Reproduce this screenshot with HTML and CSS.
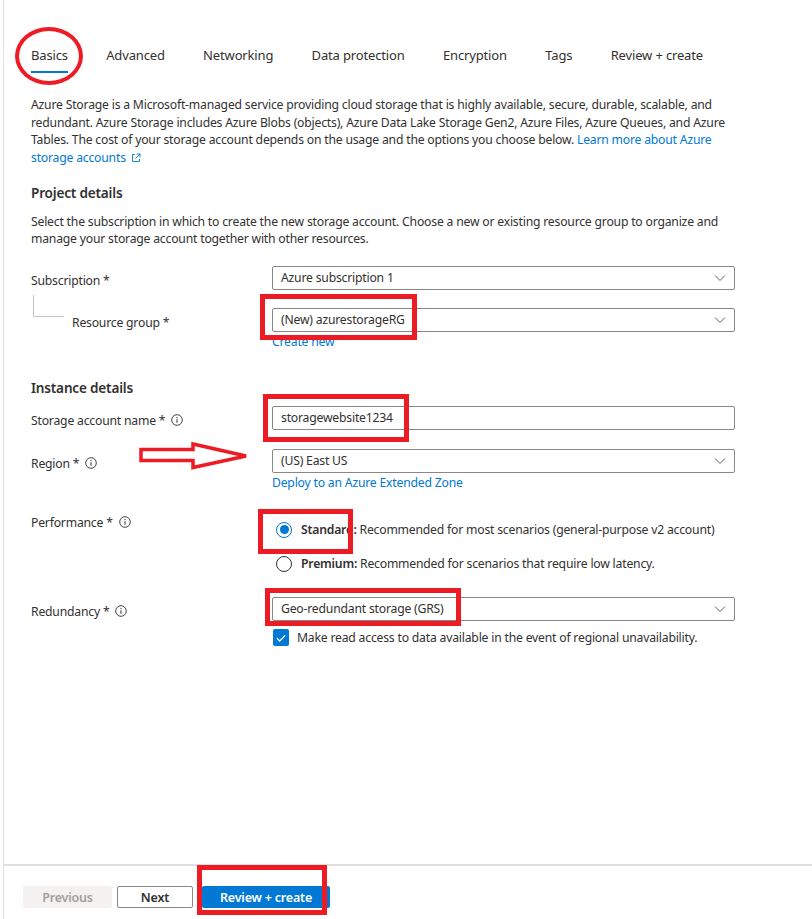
FILE: index.html
```html
<!DOCTYPE html>
<html lang="en">
<head>
    <meta charset="UTF-8">
    <meta name="viewport" content="width=device-width, initial-scale=1.0">
    <title>Create a storage account - Basics</title>
    <link rel="stylesheet" href="styles.css">
</head>
<body>
    <div class="blade">
        <div class="blade-body">
            <nav class="tabs">
                <span class="tab active">Basics</span>
                <span class="tab">Advanced</span>
                <span class="tab">Networking</span>
                <span class="tab">Data protection</span>
                <span class="tab">Encryption</span>
                <span class="tab">Tags</span>
                <span class="tab">Review + create</span>
            </nav>

            <p class="intro">
                Azure Storage is a Microsoft-managed service providing cloud storage that is highly available, secure, durable, scalable, and<br>
                redundant. Azure Storage includes Azure Blobs (objects), Azure Data Lake Storage Gen2, Azure Files, Azure Queues, and Azure<br>
                Tables. The cost of your storage account depends on the usage and the options you choose below. <a class="link" href="#">Learn more about Azure<br>
                storage accounts <svg class="ext-icon" viewBox="0 0 10 10" width="10" height="10"><path d="M4 1.5H1.5v7h7V6" fill="none" stroke="#0078d4" stroke-width="0.9"/><path d="M5.5 1h3.5v3.5M9 1L4.5 5.5" fill="none" stroke="#0078d4" stroke-width="0.9"/></svg></a>
            </p>

            <!-- Project details -->
            <h2 class="section-title">Project details</h2>
            <p class="section-desc">
                Select the subscription in which to create the new storage account. Choose a new or existing resource group to organize and<br>
                manage your storage account together with other resources.
            </p>

            <div class="field-row first">
                <label class="field-label">Subscription *</label>
                <div class="control">
                    <div class="select">
                        <span>Azure subscription 1</span>
                        <svg class="chevron" viewBox="0 0 12 6" width="12" height="6"><path d="M1 0.5l5 5 5-5" fill="none" stroke="#605e5c" stroke-width="1"/></svg>
                    </div>
                </div>
            </div>

            <div class="field-row nested">
                <label class="field-label">
                    <span class="tree-line"></span>
                    <span>Resource group *</span>
                </label>
                <div class="control">
                    <div class="select">
                        <span>(New) azurestorageRG</span>
                        <svg class="chevron" viewBox="0 0 12 6" width="12" height="6"><path d="M1 0.5l5 5 5-5" fill="none" stroke="#605e5c" stroke-width="1"/></svg>
                    </div>
                    <a class="link sub-link" href="#">Create new</a>
                </div>
            </div>

            <!-- Instance details -->
            <h2 class="section-title instance">Instance details</h2>

            <div class="field-row tight">
                <label class="field-label">Storage account name * <svg class="info" viewBox="0 0 12 12" width="12" height="12"><circle cx="6" cy="6" r="5.3" fill="none" stroke="#323130" stroke-width="0.9"/><path d="M6 5.2v3.6" stroke="#323130" stroke-width="1"/><circle cx="6" cy="3.6" r="0.65" fill="#323130"/></svg></label>
                <div class="control">
                    <div class="input">storagewebsite1234</div>
                </div>
            </div>

            <div class="field-row region">
                <label class="field-label">Region * <svg class="info" viewBox="0 0 12 12" width="12" height="12"><circle cx="6" cy="6" r="5.3" fill="none" stroke="#323130" stroke-width="0.9"/><path d="M6 5.2v3.6" stroke="#323130" stroke-width="1"/><circle cx="6" cy="3.6" r="0.65" fill="#323130"/></svg></label>
                <div class="control">
                    <div class="select">
                        <span>(US) East US</span>
                        <svg class="chevron" viewBox="0 0 12 6" width="12" height="6"><path d="M1 0.5l5 5 5-5" fill="none" stroke="#605e5c" stroke-width="1"/></svg>
                    </div>
                    <a class="link sub-link" href="#">Deploy to an Azure Extended Zone</a>
                </div>
            </div>

            <div class="field-row performance">
                <label class="field-label">Performance * <svg class="info" viewBox="0 0 12 12" width="12" height="12"><circle cx="6" cy="6" r="5.3" fill="none" stroke="#323130" stroke-width="0.9"/><path d="M6 5.2v3.6" stroke="#323130" stroke-width="1"/><circle cx="6" cy="3.6" r="0.65" fill="#323130"/></svg></label>
                <div class="control radio-group">
                    <div class="radio-option">
                        <span class="radio checked"></span>
                        <span><strong>Standard:</strong> Recommended for most scenarios (general-purpose v2 account)</span>
                    </div>
                    <div class="radio-option">
                        <span class="radio"></span>
                        <span><strong>Premium:</strong> Recommended for scenarios that require low latency.</span>
                    </div>
                </div>
            </div>

            <div class="field-row redundancy">
                <label class="field-label">Redundancy * <svg class="info" viewBox="0 0 12 12" width="12" height="12"><circle cx="6" cy="6" r="5.3" fill="none" stroke="#323130" stroke-width="0.9"/><path d="M6 5.2v3.6" stroke="#323130" stroke-width="1"/><circle cx="6" cy="3.6" r="0.65" fill="#323130"/></svg></label>
                <div class="control">
                    <div class="select">
                        <span>Geo-redundant storage (GRS)</span>
                        <svg class="chevron" viewBox="0 0 12 6" width="12" height="6"><path d="M1 0.5l5 5 5-5" fill="none" stroke="#605e5c" stroke-width="1"/></svg>
                    </div>
                    <div class="check-option">
                        <span class="checkbox"><svg viewBox="0 0 16 16" width="16" height="16"><path d="M4 8.3l2.7 2.7L12.2 5.4" fill="none" stroke="#fff" stroke-width="1.3"/></svg></span>
                        <span>Make read access to data available in the event of regional unavailability.</span>
                    </div>
                </div>
            </div>
        </div>

        <footer class="blade-footer">
            <button class="btn btn-prev">Previous</button>
            <button class="btn btn-next">Next</button>
            <button class="btn btn-primary">Review + create</button>
        </footer>
    </div>

    <!-- red annotations drawn over the screenshot -->
    <div class="mark-circle"></div>
    <div class="mark mark-rg"></div>
    <div class="mark mark-name"></div>
    <div class="mark mark-standard"></div>
    <div class="mark mark-grs"></div>
    <div class="mark mark-review"></div>
    <svg class="mark-arrow" viewBox="0 0 112 30" width="112" height="30">
        <path d="M3 9.5H55V4L108 16 55 27.5V20.5H3Z" fill="none" stroke="#ed1c24" stroke-width="3.5" stroke-linejoin="miter"/>
    </svg>
</body>
</html>
```

FILE: styles.css
```css
/* Reset some default styles */
* {
    box-sizing: border-box;
    margin: 0;
    padding: 0;
}

body {
    font-family: "Segoe UI", "Noto Sans", sans-serif;
    font-size: 12.2px;
    letter-spacing: -0.2px;
    color: #323130;
    background-color: #fff;
    padding-left: 3px;
    position: relative;
}

.blade {
    border-left: 1px solid #e1dfdd;
    min-height: 100vh;
    display: flex;
    flex-direction: column;
}

.blade-body {
    flex: 1;
    padding: 44px 0 0 27px;
}

/* Tabs */
.tabs {
    display: flex;
    gap: 38.3px;
}

.tab {
    font-size: 13px;
    letter-spacing: -0.15px;
    line-height: 22px;
    padding-bottom: 5px;
    border-bottom: 2px solid transparent;
}

.tab.active {
    border-bottom-color: #0078d4;
}

.link {
    color: #0078d4;
    text-decoration: none;
}

.intro {
    margin-top: 23px;
    line-height: 17.7px;
}

.ext-icon {
    vertical-align: -1px;
    margin-left: 2px;
}

.section-title {
    margin-top: 16px;
    font-size: 13.6px;
    font-weight: 600;
    line-height: 20px;
}

.section-title.instance {
    margin-top: 28px;
}

.section-desc {
    margin-top: 10px;
    line-height: 17.5px;
}

/* Form rows */
.field-row {
    display: grid;
    grid-template-columns: 241px 463px;
    align-items: start;
    margin-top: 18px;
}

.field-row.tight {
    margin-top: 8px;
}

.field-row.region {
    margin-top: 19px;
}

.field-row.performance {
    margin-top: 21px;
}

.field-row.redundancy {
    margin-top: 23px;
}

.field-label {
    display: flex;
    align-items: center;
    height: 24px;
    padding-top: 5px;
    white-space: nowrap;
}

.performance .field-label {
    height: 20px;
    padding-top: 1px;
}

.info {
    margin-left: 6px;
}

.nested .field-label {
    padding-top: 0;
}

.tree-line {
    align-self: flex-start;
    width: 31px;
    height: 22px;
    margin: -13px 8px 0 2px;
    border-left: 1px solid #c8c6c4;
    border-bottom: 1px solid #c8c6c4;
}

.nested .field-label span:last-child {
    padding-top: 6px;
}

.select,
.input {
    height: 24px;
    border: 1px solid #8a8886;
    border-radius: 2px;
    display: flex;
    align-items: center;
    padding: 0 8px;
    background-color: #fff;
}

.select {
    justify-content: space-between;
}

.sub-link {
    display: block;
    line-height: 18px;
    padding-top: 1px;
    height: 18px;
}

/* Radios */
.radio-group {
    padding: 8px 0 0 4px;
}

.radio-option {
    display: flex;
    align-items: center;
    gap: 9px;
    height: 20px;
    white-space: nowrap;
}

.radio-option + .radio-option {
    margin-top: 14px;
}

.radio-option strong {
    font-weight: 600;
}

.radio {
    flex: none;
    width: 16px;
    height: 16px;
    border: 1px solid #323130;
    border-radius: 50%;
    display: flex;
    align-items: center;
    justify-content: center;
}

.radio.checked {
    border-color: #0078d4;
}

.radio.checked::after {
    content: "";
    width: 9px;
    height: 9px;
    border-radius: 50%;
    background-color: #0078d4;
}

/* Checkbox */
.check-option {
    display: flex;
    align-items: center;
    gap: 8px;
    margin-top: 8px;
    padding-left: 1px;
    height: 18px;
    white-space: nowrap;
}

.checkbox {
    flex: none;
    width: 16px;
    height: 17px;
    border-radius: 2px;
    background-color: #0078d4;
    display: flex;
    align-items: center;
    justify-content: center;
}

/* Footer */
.blade-footer {
    border-top: 2px solid #e1dfdd;
    padding: 20px 0 11px 19px;
    display: flex;
}

.btn {
    height: 22px;
    font-family: inherit;
    font-size: 12.5px;
    letter-spacing: -0.2px;
    font-weight: 600;
    border: 1px solid transparent;
    border-radius: 2px;
    background: none;
}

.btn-prev {
    width: 89px;
    background-color: #f3f2f1;
    color: #a19f9d;
}

.btn-next {
    width: 76px;
    margin-left: 5px;
    border-color: #8a8886;
    background-color: #fff;
    color: #323130;
}

.btn-primary {
    width: 128px;
    margin-left: 9px;
    background-color: #0078d4;
    color: #fff;
}

/* Red annotations */
.mark,
.mark-circle,
.mark-arrow {
    position: absolute;
}

.mark {
    border: 5px solid #ed1c24;
}

.mark-circle {
    left: 15px;
    top: 27px;
    width: 68px;
    height: 58px;
    border: 4px solid #ed1c24;
    border-radius: 50%;
}

.mark-rg {
    left: 260px;
    top: 294px;
    width: 157px;
    height: 46px;
}

.mark-name {
    left: 263px;
    top: 394px;
    width: 146px;
    height: 48px;
}

.mark-standard {
    left: 258px;
    top: 509px;
    width: 95px;
    height: 45px;
}

.mark-grs {
    left: 265px;
    top: 588px;
    width: 196px;
    height: 38px;
}

.mark-review {
    left: 197px;
    top: 865px;
    width: 130px;
    height: 50px;
}

.mark-arrow {
    left: 138px;
    top: 440px;
}
```
